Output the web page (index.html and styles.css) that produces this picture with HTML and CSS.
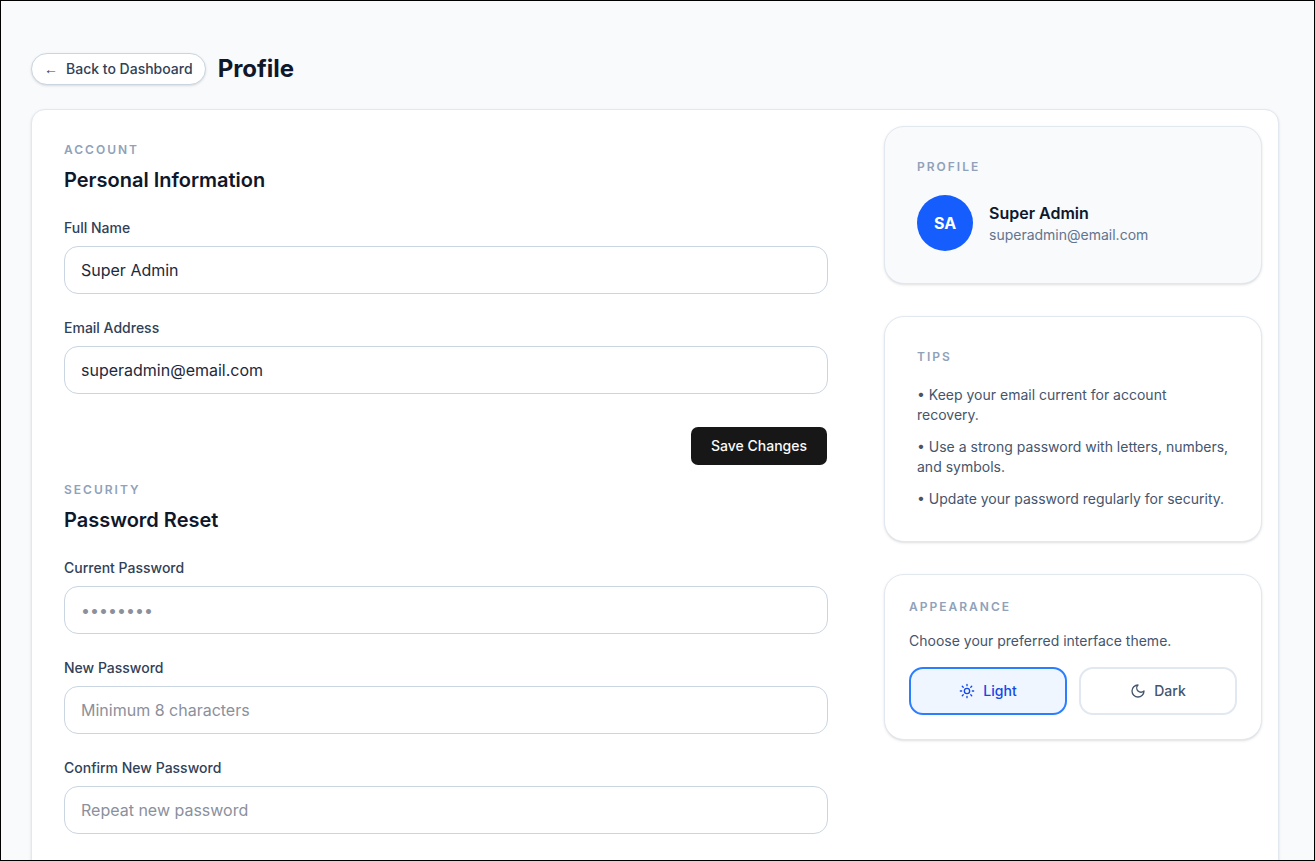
FILE: index.html
```html
<!DOCTYPE html>
<html lang="en">
<head>
    <meta charset="UTF-8">
    <meta name="viewport" content="width=device-width, initial-scale=1.0">
    <title>Profile</title>
    <link rel="stylesheet" href="styles.css">
</head>
<body>
    <div class="page">
        <header class="page-header">
            <a href="#" class="back-link"><span class="arrow">←</span> Back to Dashboard</a>
            <h1>Profile</h1>
        </header>

        <main class="panel">
            <div class="forms">
                <form class="section">
                    <p class="eyebrow">Account</p>
                    <h2>Personal Information</h2>
                    <div class="field">
                        <label for="full-name">Full Name</label>
                        <input type="text" id="full-name" value="Super Admin">
                    </div>
                    <div class="field">
                        <label for="email">Email Address</label>
                        <input type="email" id="email" value="superadmin@email.com">
                    </div>
                    <div class="actions">
                        <button type="submit" class="btn-save">Save Changes</button>
                    </div>
                </form>

                <form class="section">
                    <p class="eyebrow">Security</p>
                    <h2>Password Reset</h2>
                    <div class="field">
                        <label for="current-password">Current Password</label>
                        <input type="password" id="current-password" placeholder="••••••••">
                    </div>
                    <div class="field">
                        <label for="new-password">New Password</label>
                        <input type="password" id="new-password" placeholder="Minimum 8 characters">
                    </div>
                    <div class="field">
                        <label for="confirm-password">Confirm New Password</label>
                        <input type="password" id="confirm-password" placeholder="Repeat new password">
                    </div>
                </form>
            </div>

            <aside class="sidebar">
                <section class="card card-profile">
                    <p class="eyebrow">Profile</p>
                    <div class="user">
                        <div class="avatar">SA</div>
                        <div>
                            <p class="user-name">Super Admin</p>
                            <p class="user-email">superadmin@email.com</p>
                        </div>
                    </div>
                </section>

                <section class="card">
                    <p class="eyebrow">Tips</p>
                    <ul class="tips">
                        <li>• Keep your email current for account recovery.</li>
                        <li>• Use a strong password with letters, numbers, and symbols.</li>
                        <li>• Update your password regularly for security.</li>
                    </ul>
                </section>

                <section class="card card-appearance">
                    <p class="eyebrow">Appearance</p>
                    <p class="hint">Choose your preferred interface theme.</p>
                    <div class="themes">
                        <button type="button" class="theme active" aria-pressed="true">
                            <svg viewBox="0 0 24 24" aria-hidden="true">
                                <circle cx="12" cy="12" r="4"/>
                                <path d="M12 2v2M12 20v2M4.93 4.93l1.41 1.41M17.66 17.66l1.41 1.41M2 12h2M20 12h2M6.34 17.66l-1.41 1.41M19.07 4.93l-1.41 1.41"/>
                            </svg>
                            Light
                        </button>
                        <button type="button" class="theme" aria-pressed="false">
                            <svg viewBox="0 0 24 24" aria-hidden="true">
                                <path d="M12 3a6 6 0 0 0 9 9 9 9 0 1 1-9-9Z"/>
                            </svg>
                            Dark
                        </button>
                    </div>
                </section>
            </aside>
        </main>
    </div>
</body>
</html>
```
FILE: styles.css
```css
* {
    box-sizing: border-box;
}
body, h1, h2, p, ul {
    margin: 0;
    padding: 0;
}
body {
    font-family: Inter, "Liberation Sans", sans-serif;
    font-size: 14px;
    line-height: 20px;
    color: #0f172b;
}
button, input {
    font-family: inherit;
    line-height: 20px;
}
.page {
    height: 100vh;
    padding: 52px 35px 32px 30px;
    border: 1px solid #000;
    background-color: #f8fafc;
    overflow-y: auto;
    scrollbar-width: none;
}

/* Header */
.page-header {
    display: flex;
    align-items: center;
    gap: 12px;
    margin-bottom: 24px;
}
.back-link {
    display: flex;
    gap: 8px;
    padding: 5px 12px;
    border: 1px solid #cad5e2;
    border-radius: 16px;
    background-color: #fff;
    color: #314158;
    font-weight: 500;
    text-decoration: none;
    box-shadow: 0 1px 3px rgba(0, 0, 0, 0.1), 0 1px 2px -1px rgba(0, 0, 0, 0.1);
}
.arrow {
    font-family: "Liberation Sans", sans-serif;
}
h1 {
    font-size: 24px;
    line-height: 32px;
    font-weight: 700;
}
h2 {
    margin: 8px 0 24px;
    font-size: 20px;
    line-height: 28px;
    font-weight: 600;
}

/* Main panel */
.panel {
    display: grid;
    grid-template-columns: 1fr 378px;
    gap: 40px;
    align-items: start;
    padding: 16px;
    border: 1px solid #e2e8f0;
    border-radius: 14px;
    background-color: #fff;
    box-shadow: 0 1px 3px rgba(0, 0, 0, 0.1), 0 1px 2px -1px rgba(0, 0, 0, 0.1);
}
.forms {
    display: flex;
    flex-direction: column;
    gap: 16px;
    padding: 16px;
}
.eyebrow {
    font-size: 12px;
    line-height: 16px;
    font-weight: 600;
    letter-spacing: 2px;
    text-transform: uppercase;
    color: #90a1b9;
}
.field {
    display: flex;
    flex-direction: column;
    gap: 8px;
    margin-bottom: 24px;
}
.field label {
    font-weight: 500;
    color: #314158;
}
.field input {
    width: 100%;
    height: 48px;
    padding: 0 16px;
    border: 1px solid #cad5e2;
    border-radius: 14px;
    background-color: #fff;
    color: #1d293d;
    font-size: 16px;
}
.field input::placeholder {
    color: #8b909c;
}
.actions {
    display: flex;
    justify-content: flex-end;
    padding-top: 8px;
}
.btn-save {
    height: 40px;
    padding: 0 20px;
    border: 1px solid transparent;
    border-radius: 8px;
    background-color: #171717;
    background-clip: padding-box;
    color: #fafafa;
    font-size: 14px;
    font-weight: 500;
    cursor: pointer;
}

/* Sidebar */
.sidebar {
    display: flex;
    flex-direction: column;
    gap: 32px;
}
.card {
    display: flex;
    flex-direction: column;
    gap: 20px;
    padding: 32px;
    border: 1px solid #e2e8f0;
    border-radius: 20px;
    background-color: #fff;
    box-shadow: 0 1px 3px rgba(0, 0, 0, 0.1), 0 1px 2px -1px rgba(0, 0, 0, 0.1);
}
.card-profile {
    background-color: #f8fafc;
}
.card-appearance {
    gap: 16px;
    padding: 24px;
}
.user {
    display: flex;
    align-items: center;
    gap: 16px;
}
.avatar {
    display: flex;
    align-items: center;
    justify-content: center;
    width: 56px;
    height: 56px;
    border-radius: 50%;
    background-color: #155dfc;
    color: #fff;
    font-size: 16px;
    font-weight: 700;
}
.user-name {
    font-size: 16px;
    line-height: 24px;
    font-weight: 600;
}
.user-email {
    color: #62748e;
}
.tips {
    display: flex;
    flex-direction: column;
    gap: 12px;
    list-style: none;
    color: #45556c;
}
.hint {
    color: #45556c;
}
.themes {
    display: grid;
    grid-template-columns: 1fr 1fr;
    gap: 12px;
}
.theme {
    display: flex;
    align-items: center;
    justify-content: center;
    gap: 8px;
    height: 48px;
    border: 2px solid #e2e8f0;
    border-radius: 14px;
    background-color: #fff;
    color: #45556c;
    font-size: 14px;
    font-weight: 500;
    cursor: pointer;
}
.theme.active {
    border-color: #2b7fff;
    background-color: #eff6ff;
    color: #1447e6;
}
.theme svg {
    width: 16px;
    height: 16px;
    fill: none;
    stroke: currentColor;
    stroke-width: 2;
    stroke-linecap: round;
    stroke-linejoin: round;
}
```
